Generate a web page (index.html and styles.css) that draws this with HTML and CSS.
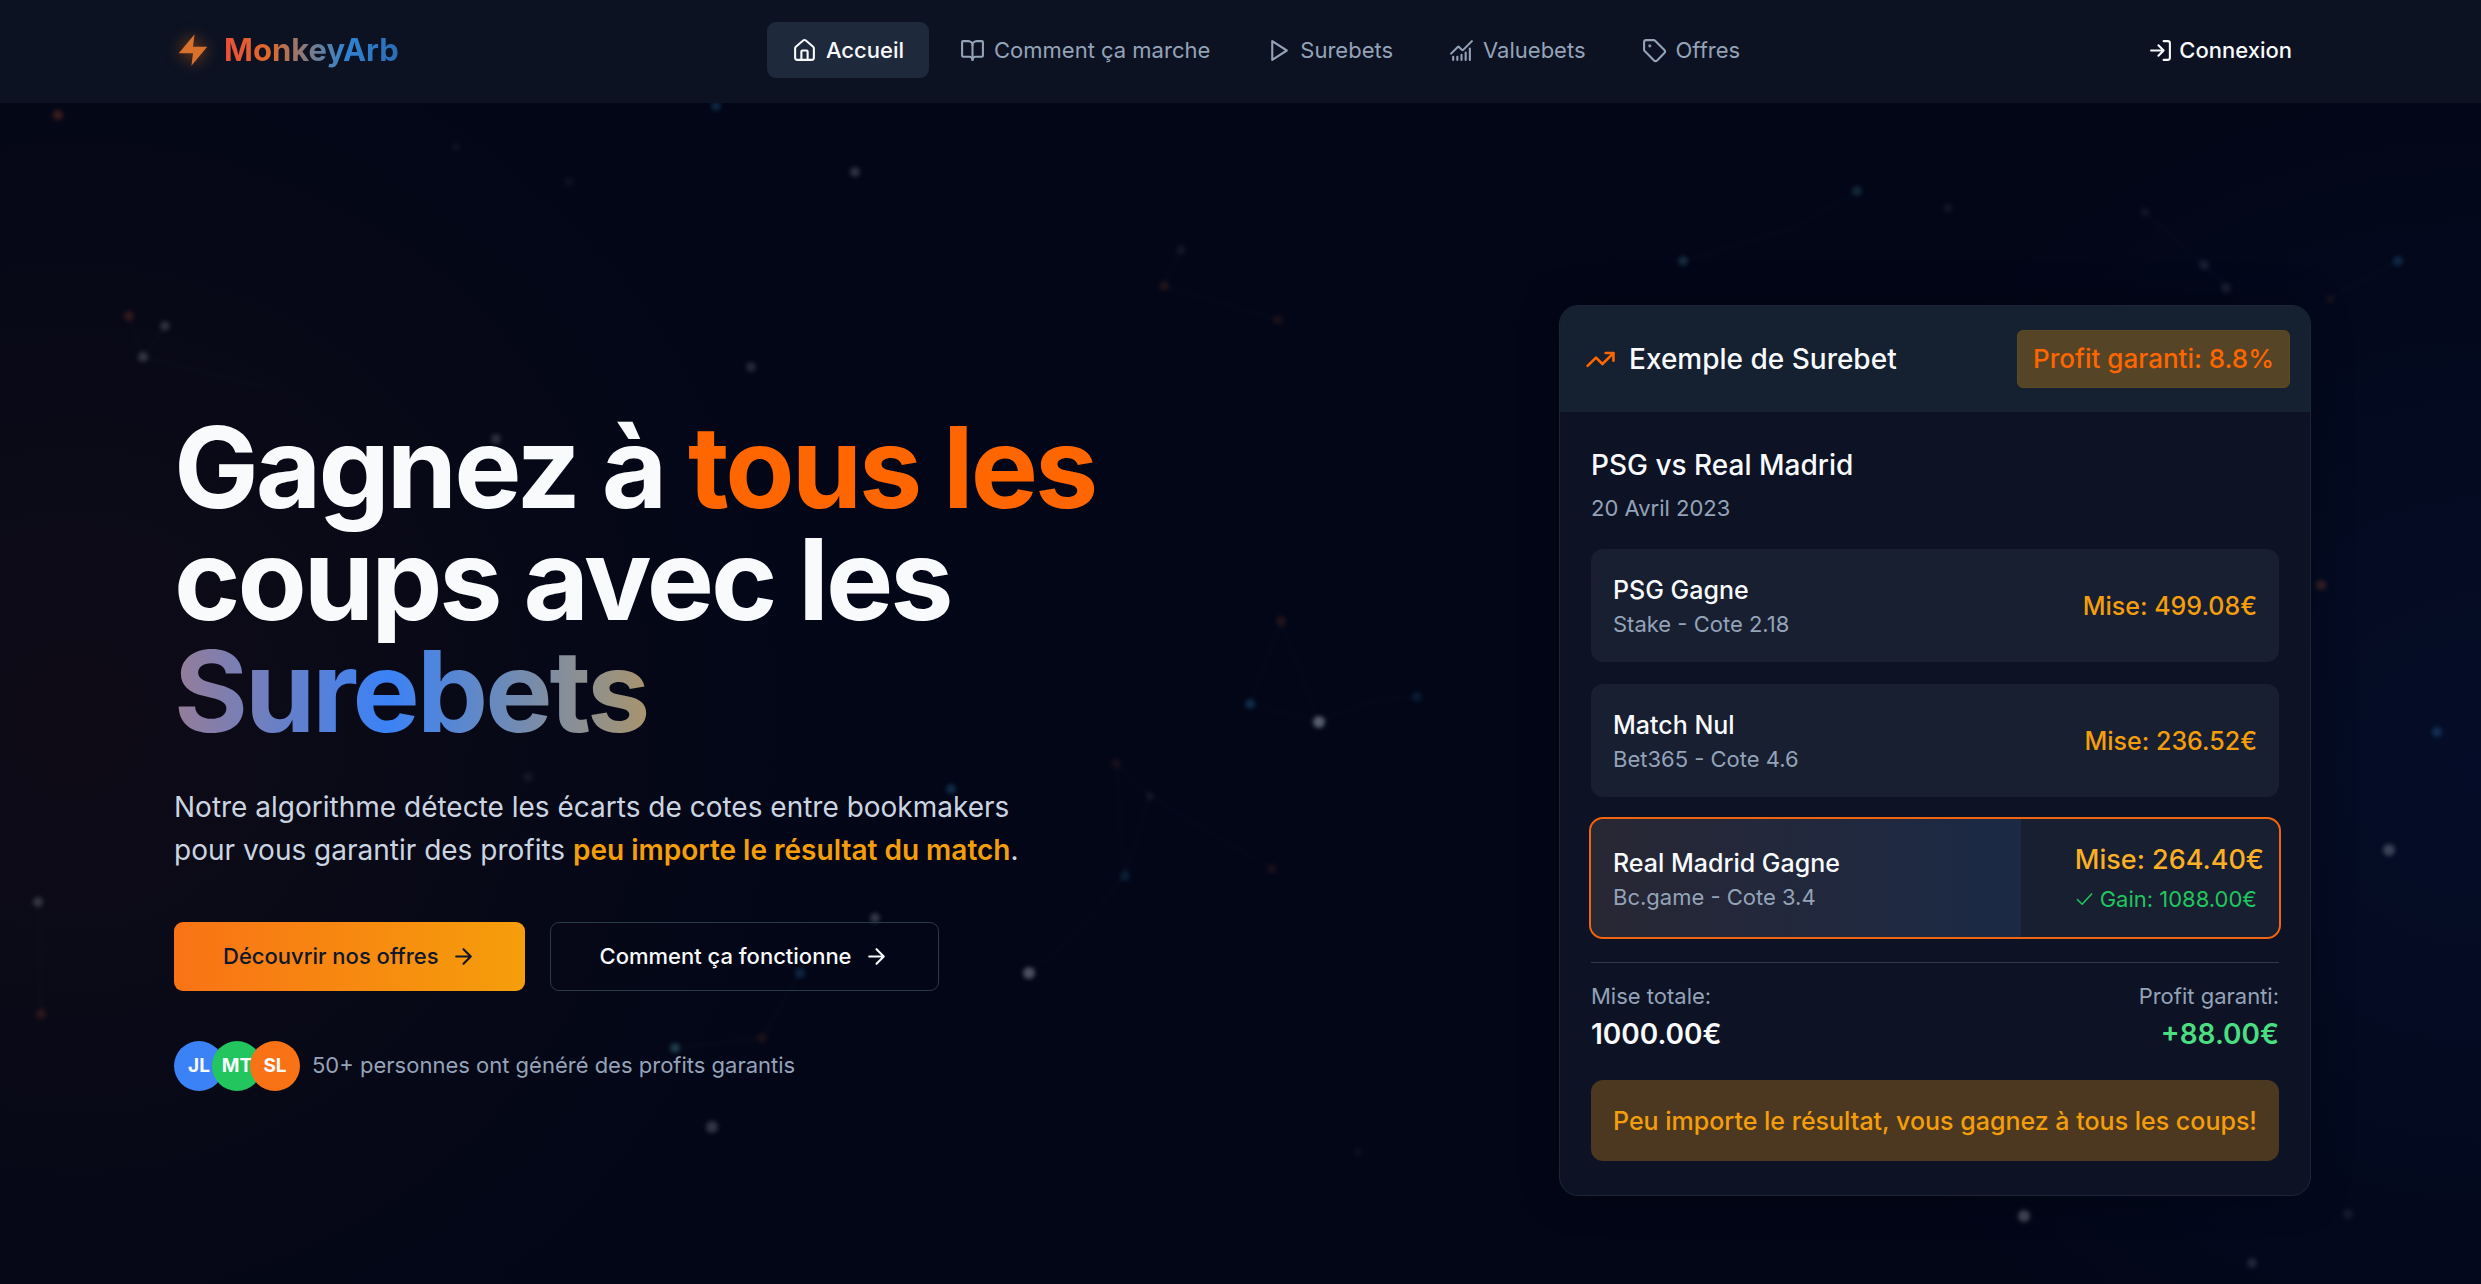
FILE: index.html
```html
<!doctype html>
<html lang="fr">
  <head>
    <meta charset="utf-8">
    <meta name="viewport" content="width=device-width, initial-scale=1">
    <title>MonkeyArb</title>
    <link rel="stylesheet" href="styles.css">
  </head>
  <body>

    <svg class="particles" viewBox="0 0 2481 1284" preserveAspectRatio="xMidYMid slice" aria-hidden="true">
      <g stroke="#94a3b8" stroke-opacity=".07" stroke-width="2" fill="none">
	<path d="M129 316L143 357L165 326M143 357L266 388"/>
	<path d="M1181 250L1164 286L1278 320"/>
	<path d="M1683 261L1794 228L1857 191"/>
	<path d="M2145 212L2204 265L2226 288M2330 299L2398 261"/>
	<path d="M1250 704L1319 722L1371 701L1417 697M1281 621L1250 704M1281 621L1319 722"/>
	<path d="M1116 763L1150 796L1125 876L1116 763M1150 796L1272 869M1125 876L1068 942L1029 973"/>
	<path d="M675 1048L762 1038L800 973"/>
	<path d="M38 902L41 1014"/>
      </g>
      <g fill="#cbd5e1">
	<circle cx="855" cy="172" r="5" opacity=".35"/>
	<circle cx="165" cy="326" r="5" opacity=".3"/>
	<circle cx="143" cy="357" r="5" opacity=".35"/>
	<circle cx="751" cy="367" r="5" opacity=".28"/>
	<circle cx="496" cy="439" r="5" opacity=".3"/>
	<circle cx="1319" cy="722" r="6" opacity=".7"/>
	<circle cx="1029" cy="973" r="6" opacity=".6"/>
	<circle cx="875" cy="918" r="5" opacity=".4"/>
	<circle cx="38" cy="902" r="5" opacity=".35"/>
	<circle cx="712" cy="1127" r="6" opacity=".38"/>
	<circle cx="2389" cy="850" r="6" opacity=".45"/>
	<circle cx="2024" cy="1216" r="6" opacity=".5"/>
	<circle cx="2252" cy="1263" r="5" opacity=".25"/>
	<circle cx="2348" cy="1214" r="5" opacity=".15"/>
	<circle cx="2204" cy="265" r="5" opacity=".18"/>
	<circle cx="2226" cy="288" r="5" opacity=".18"/>
	<circle cx="2145" cy="212" r="4" opacity=".12"/>
	<circle cx="1948" cy="208" r="4" opacity=".14"/>
	<circle cx="1181" cy="250" r="5" opacity=".12"/>
	<circle cx="569" cy="182" r="5" opacity=".08"/>
	<circle cx="456" cy="147" r="4" opacity=".08"/>
	<circle cx="528" cy="777" r="5" opacity=".12"/>
	<circle cx="1150" cy="796" r="4" opacity=".12"/>
	<circle cx="1358" cy="1152" r="4" opacity=".08"/>
      </g>
      <g fill="#3b9fe0">
	<circle cx="716" cy="106" r="5" opacity=".35"/>
	<circle cx="951" cy="789" r="5" opacity=".4"/>
	<circle cx="800" cy="973" r="5" opacity=".35"/>
	<circle cx="1250" cy="704" r="5" opacity=".4"/>
	<circle cx="1417" cy="697" r="5" opacity=".22"/>
	<circle cx="2398" cy="261" r="5" opacity=".35"/>
	<circle cx="2437" cy="732" r="5" opacity=".4"/>
	<circle cx="1125" cy="876" r="5" opacity=".25"/>
      </g>
      <g fill="#5eb5c4">
	<circle cx="675" cy="1048" r="5" opacity=".5"/>
	<circle cx="1683" cy="261" r="5" opacity=".35"/>
	<circle cx="1857" cy="191" r="5" opacity=".3"/>
      </g>
      <g fill="#e0632f">
	<circle cx="58" cy="115" r="5" opacity=".4"/>
	<circle cx="129" cy="316" r="5" opacity=".3"/>
	<circle cx="1164" cy="286" r="5" opacity=".22"/>
	<circle cx="1278" cy="320" r="5" opacity=".18"/>
	<circle cx="1281" cy="621" r="5" opacity=".24"/>
	<circle cx="2321" cy="585" r="5" opacity=".4"/>
	<circle cx="2330" cy="299" r="4" opacity=".15"/>
	<circle cx="1272" cy="869" r="5" opacity=".16"/>
	<circle cx="1116" cy="763" r="5" opacity=".15"/>
	<circle cx="762" cy="1038" r="5" opacity=".18"/>
	<circle cx="41" cy="1014" r="5" opacity=".25"/>
      </g>
    </svg>

    <header class="header">
      <a class="logo" href="#">
	<svg class="logo-bolt" viewBox="0 0 24 24" fill="currentColor" aria-hidden="true"><path d="M13 2L3 14h9l-1 8 10-12h-9z"/></svg>
	<span class="logo-text">MonkeyArb</span>
      </a>
      <nav class="nav">
	<a href="#" class="current"><svg class="icon" viewBox="0 0 24 24" aria-hidden="true"><path d="M15 21v-8a1 1 0 0 0-1-1h-4a1 1 0 0 0-1 1v8"/><path d="M3 10a2 2 0 0 1 .709-1.528l7-5.999a2 2 0 0 1 2.582 0l7 5.999A2 2 0 0 1 21 10v9a2 2 0 0 1-2 2H5a2 2 0 0 1-2-2z"/></svg>Accueil</a>
	<a href="#"><svg class="icon" viewBox="0 0 24 24" aria-hidden="true"><path d="M12 7v14"/><path d="M3 18a1 1 0 0 1-1-1V4a1 1 0 0 1 1-1h5a4 4 0 0 1 4 4 4 4 0 0 1 4-4h5a1 1 0 0 1 1 1v13a1 1 0 0 1-1 1h-6a3 3 0 0 0-3 3 3 3 0 0 0-3-3z"/></svg>Comment ça marche</a>
	<a href="#"><svg class="icon" viewBox="0 0 24 24" aria-hidden="true"><path d="M6 3l14 9-14 9z"/></svg>Surebets</a>
	<a href="#"><svg class="icon" viewBox="0 0 24 24" aria-hidden="true"><path d="M12 16v5M16 14v7M20 10v11M8 18v3M4 18v3"/><path d="M22 3l-8.646 8.646a.5.5 0 0 1-.708 0L9.354 8.354a.5.5 0 0 0-.707 0L2 15"/></svg>Valuebets</a>
	<a href="#"><svg class="icon" viewBox="0 0 24 24" aria-hidden="true"><path d="M12.586 2.586A2 2 0 0 0 11.172 2H4a2 2 0 0 0-2 2v7.172a2 2 0 0 0 .586 1.414l8.704 8.704a2.426 2.426 0 0 0 3.42 0l6.58-6.58a2.426 2.426 0 0 0 0-3.42z"/><circle cx="7.5" cy="7.5" r=".5" fill="currentColor"/></svg>Offres</a>
      </nav>
      <a class="login" href="#"><svg class="icon" viewBox="0 0 24 24" aria-hidden="true"><path d="M15 3h4a2 2 0 0 1 2 2v14a2 2 0 0 1-2 2h-4M10 17l5-5-5-5M15 12H3"/></svg>Connexion</a>
    </header>

    <main class="hero">
      <section class="intro">
	<h1>Gagnez à <span class="orange">tous les</span> coups avec les <span class="gradient">Surebets</span></h1>
	<p class="lead">Notre algorithme détecte les écarts de cotes entre bookmakers pour vous garantir des profits <strong>peu importe le résultat du match</strong>.</p>
	<div class="actions">
	  <button class="btn btn-primary">Découvrir nos offres<svg class="icon" viewBox="0 0 24 24" aria-hidden="true"><path d="M5 12h14M12 5l7 7-7 7"/></svg></button>
	  <button class="btn btn-outline">Comment ça fonctionne<svg class="icon" viewBox="0 0 24 24" aria-hidden="true"><path d="M5 12h14M12 5l7 7-7 7"/></svg></button>
	</div>
	<div class="proof">
	  <div class="avatars">
	    <span class="avatar blue">JL</span>
	    <span class="avatar green">MT</span>
	    <span class="avatar amber">SL</span>
	  </div>
	  <span>50+ personnes ont généré des profits garantis</span>
	</div>
      </section>

      <section class="card">
	<div class="card-head">
	  <h2><svg class="icon" viewBox="0 0 24 24" aria-hidden="true"><path d="M22 7l-8.5 8.5-5-5L2 17"/><path d="M16 7h6v6"/></svg>Exemple de Surebet</h2>
	  <span class="badge">Profit garanti: 8.8%</span>
	</div>
	<div class="card-body">
	  <h3>PSG vs Real Madrid</h3>
	  <p class="muted">20 Avril 2023</p>

	  <ul class="bets">
	    <li class="bet">
	      <div><p class="bet-name">PSG Gagne</p><p class="muted">Stake - Cote 2.18</p></div>
	      <p class="stake">Mise: 499.08€</p>
	    </li>
	    <li class="bet">
	      <div><p class="bet-name">Match Nul</p><p class="muted">Bet365 - Cote 4.6</p></div>
	      <p class="stake">Mise: 236.52€</p>
	    </li>
	    <li class="bet winner">
	      <div><p class="bet-name">Real Madrid Gagne</p><p class="muted">Bc.game - Cote 3.4</p></div>
	      <div class="result">
		<p class="stake">Mise: 264.40€</p>
		<p class="gain"><svg viewBox="0 0 24 24" aria-hidden="true"><path d="M21 5L9 18l-6-6"/></svg>Gain: 1088.00€</p>
	      </div>
	    </li>
	  </ul>

	  <div class="totals">
	    <div><p class="muted">Mise totale:</p><p class="total">1000.00€</p></div>
	    <div class="right"><p class="muted">Profit garanti:</p><p class="total profit">+88.00€</p></div>
	  </div>
	  <p class="callout">Peu importe le résultat, vous gagnez à tous les coups!</p>
	</div>
      </section>
    </main>

  </body>
</html>
```
FILE: styles.css
```css
*{box-sizing:border-box;}

body{
margin:0;
min-height:100vh;
overflow:hidden;
position:relative;
color:#f8fafc;
font-family:Inter,"Liberation Sans",sans-serif;
font-size:22px;
line-height:31px;
background:
radial-gradient(circle at 3% 56%,rgba(249,115,22,.05),transparent 800px),
radial-gradient(circle at 100% 60%,rgba(37,99,235,.08),transparent 700px),
#020617;}

h1,h2,h3,p,ul{margin:0;padding:0;}
a{color:inherit;text-decoration:none;}

.icon{
width:25px;
height:25px;
flex:none;
fill:none;
stroke:currentColor;
stroke-width:2;
stroke-linecap:round;
stroke-linejoin:round;}

/* background dots, under everything */
.particles{
position:absolute;
top:0;
left:0;
width:100%;
height:100%;
z-index:-1;
opacity:.6;
filter:blur(2px);}

.header{
display:flex;
align-items:center;
justify-content:space-between;
height:103px;
padding:0 174px 3px;
background:#0c1222;}

.logo{display:flex;align-items:center;gap:12px;}
.logo-bolt{
width:38px;
height:38px;
color:#d9702b;
filter:drop-shadow(0 0 8px rgba(249,115,22,.6));}
.logo-text{
font-size:31px;
line-height:44px;
font-weight:700;
color:transparent;
background:linear-gradient(90deg,#e8503a,#e0692a 25%,#64809f 55%,#2f83d3 70%,#2d6cb4);
-webkit-background-clip:text;
background-clip:text;}

.nav{display:flex;gap:6px;}
.nav a{
display:flex;
align-items:center;
gap:9px;
height:56px;
padding:0 25px;
border-radius:9px;
color:#94a3b8;}
.nav a.current{color:#f8fafc;background:#1e293b;font-weight:500;}

.login{
display:flex;
align-items:center;
gap:6px;
padding:0 15px;
font-weight:500;}

.hero{
display:flex;
align-items:center;
justify-content:space-between;
gap:80px;
padding:202px 170px 88px 174px;}

.intro{flex:0 1 1000px;}
h1{
font-size:113px;
line-height:112px;
font-weight:700;
letter-spacing:-3px;}
.orange{color:#f60;}
.gradient{
color:transparent;
background:linear-gradient(90deg,#957d98,#3b82f6 45%,#a8946f);
-webkit-background-clip:text;
background-clip:text;}

.lead{
max-width:900px;
margin-top:39px;
font-size:28px;
line-height:43px;
color:#cbd5e1;}
.lead strong{font-weight:600;color:#f59e0b;}

.actions{display:flex;gap:25px;margin-top:50px;}
.btn{
display:flex;
align-items:center;
gap:12px;
height:69px;
padding:0 49px;
border:1px solid transparent;
border-radius:9px;
font:inherit;
font-weight:500;}
.btn-primary{
border:0;
color:#0f172a;
background:linear-gradient(90deg,#f97316,#f59e0b);}
.btn-outline{
border-color:#293a48;
color:#f8fafc;
background:transparent;}

.proof{
display:flex;
align-items:center;
gap:12px;
margin-top:50px;
color:#94a3b8;}
.avatars{display:flex;}
.avatar{
width:50px;
height:50px;
border-radius:50%;
font-size:19px;
line-height:50px;
font-weight:700;
text-align:center;
color:#f8fafc;}
.avatar + .avatar{margin-left:-12px;}
.blue{background:#3b82f6;}
.green{background:#22c55e;}
.amber{background:#f97316;}

.card{
flex:0 1 752px;
overflow:hidden;
border:1px solid #1c2636;
border-radius:19px;
background:#0d1325;
box-shadow:0 0 40px rgba(0,0,0,.3);}
.card-head{
display:flex;
align-items:center;
justify-content:space-between;
padding:24px 20px 24px 25px;
background:#152030;}
.card-head h2{
display:flex;
align-items:center;
gap:13px;
font-size:28px;
line-height:44px;
font-weight:500;}
.card-head .icon{width:31px;height:31px;color:#f60;}
.badge{
padding:7px 15px;
border:1px solid #5c4a24;
border-radius:6px;
font-size:26px;
line-height:42px;
font-weight:500;
color:#f60;
background:#554425;}

.card-body{padding:31px 31px 34px;}
.card-body h3{font-size:28px;line-height:44px;font-weight:500;}
.card-body h3 + .muted{margin-top:6px;}
.muted{color:#94a3b8;}

.bets{
display:flex;
flex-direction:column;
gap:22px;
margin-top:25px;
list-style:none;}
.bet{
display:flex;
align-items:center;
justify-content:space-between;
padding:22px;
border-radius:12px;
background:#171f31;}
.bet-name{font-size:25px;line-height:38px;font-weight:500;}
.stake{font-size:25px;line-height:38px;font-weight:500;color:#f59e0b;}
.winner{
outline:2px solid #f26510;
background:linear-gradient(90deg,#282734,#1b2945) no-repeat 0 0/62.5% 100%,#171f31;}
.result{display:flex;flex-direction:column;align-items:flex-end;gap:5px;}
.winner .stake{margin-right:-7px;font-size:27px;color:#fbaf24;}
.gain{display:flex;align-items:center;gap:6px;color:#22c55e;}
.gain svg{
width:19px;
height:19px;
fill:none;
stroke:currentColor;
stroke-width:2;
stroke-linecap:round;
stroke-linejoin:round;}

.totals{
display:flex;
justify-content:space-between;
margin-top:25px;
padding-top:18px;
border-top:1px solid #2f3b4a;}
.right{text-align:right;}
.total{font-size:28px;line-height:44px;font-weight:600;}
.profit{color:#4ade80;}

.callout{
margin-top:24px;
padding:22px 0 21px;
border-radius:12px;
font-size:25px;
line-height:38px;
font-weight:500;
text-align:center;
color:#f59e0b;
background:#4c3820;}
```
